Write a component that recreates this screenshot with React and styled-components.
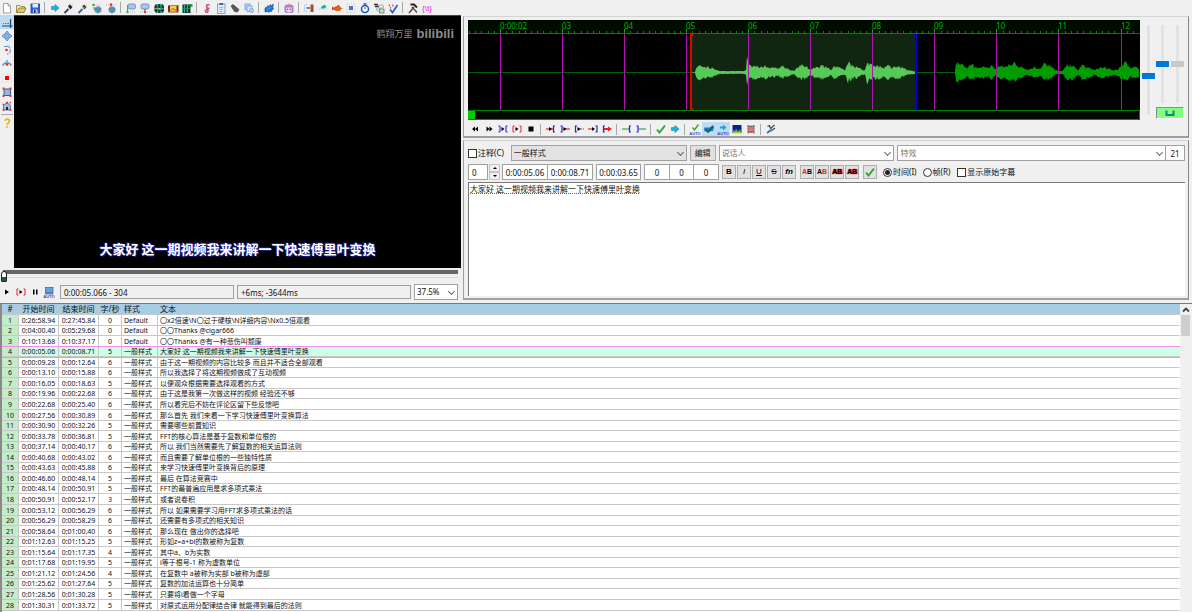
import React from "react";
import styled, { createGlobalStyle, css } from "styled-components";

const GlobalStyle = createGlobalStyle`
  * { box-sizing: border-box; }
  html, body, #root { height: 100%; margin: 0; }
  body {
    overflow: hidden;
    background: #f0f0f0;
    color: #111;
    font: 8px/12px "Noto Sans", "Noto Sans CJK SC", sans-serif;
  }
  button, input, select, textarea { font: inherit; color: inherit; margin: 0; }
`;

/* ---------- icons ---------- */

const play = <path d="M5 4.5 9 7 5 9.5z" fill="#000" />;
const auto = (
  <text x="7" y="13" fontSize="4" fontWeight="bold" textAnchor="middle" fill="#2b4fd0" fontFamily="Liberation Sans, sans-serif">
    AUTO
  </text>
);
const rightArrow = <path d="M3.5 5.5H7V3.5L11 7 7 10.500V8.500H3.500z" fill="#12b5e5" stroke="#0787b4" strokeWidth=".6" />;
const bracket = (x, dir, color) => (
  <path d={`M${x - dir} 4H${x}V10H${x - dir}`} fill="none" stroke={color} strokeWidth="1.2" />
);
const cube = (
  <>
    <path d="M5 7 8 5.500 11 7V10.500L8 12 5 10.500z" fill="#5b9fd6" stroke="#5a87a8" strokeWidth=".7" />
    <path d="M5 7 8 8.500 11 7M8 8.500V12" fill="none" stroke="#3d6e90" strokeWidth=".7" />
  </>
);

const icons = {
  new: <path d="M3.500 2.500H8L10.500 5V12H3.500zM8 2.500V5H10.500" fill="#fff" stroke="#8a8a8a" strokeWidth=".8" />,
  open: (
    <>
      <path d="M2.500 11V4.500H6L7 5.500H10.500V7" fill="#f7e9a8" stroke="#8b7a3c" strokeWidth=".8" />
      <path d="M2.500 11.500 5 7H12L10 11.500z" fill="#e3c766" stroke="#83702c" strokeWidth=".8" />
    </>
  ),
  save: (
    <>
      <rect x="3" y="3" width="8.500" height="9" fill="#2b66d9" stroke="#1c3f94" strokeWidth=".8" />
      <rect x="4.500" y="3" width="5.500" height="3.500" fill="#dfeafc" />
      <rect x="5" y="8.500" width="4.500" height="3.500" fill="#b9c6dd" />
      <rect x="6" y="9" width="1.500" height="3" fill="#12275c" />
    </>
  ),
  goto: rightArrow,
  find: (
    <>
      <path d="M2.500 12 6.500 8" stroke="#2f3f5c" strokeWidth="1.800" />
      <path d="M6 5.500 8 3.500 10.500 6 8.500 8.500z" fill="#1d2533" />
      <path d="M6.500 4.500 8 3.500" stroke="#3f6cb0" />
      <path d="M9.500 3.500h1.500v1.500z" fill="#f4b98a" />
    </>
  ),
  findNext: (
    <>
      <path d="M2.500 12 6.500 8" stroke="#41608f" strokeWidth="1.800" />
      <path d="M6 5.500 8 3.500 10.500 6 8.500 8.500z" fill="#333b4a" />
      <path d="M7 5.500 8.500 7" stroke="#8fb4e8" />
      <path d="M9.500 3.500h1.500v1.500z" fill="#f4b98a" />
    </>
  ),
  snapStart: (
    <>
      <circle cx="3.500" cy="4" r="1.300" fill="#21c043" />
      <path d="M5.500 4H11" stroke="#bbb" strokeDasharray="1 1" />
      <path d="M4 6V8.500H6" stroke="#5f87b0" fill="none" />
      {cube}
    </>
  ),
  snapEnd: (
    <>
      <circle cx="7" cy="3.500" r="1.300" fill="#e0303a" />
      <path d="M2 4H5.500M9 4H12" stroke="#bbb" strokeDasharray="1 1" />
      <path d="M7 4.500V6" stroke="#a33" />
      {cube}
    </>
  ),
  videoStart: (
    <>
      <rect x="4" y="3" width="7.500" height="5" rx="1.500" fill="#a9c6ea" stroke="#6285b3" strokeWidth=".8" />
      <path d="M3.500 4V10" stroke="#5f87b0" />
      <circle cx="3.500" cy="11" r="1.200" fill="#21c043" />
      <path d="M6 11H12" stroke="#bbb" strokeDasharray="1 1" />
    </>
  ),
  videoEnd: (
    <>
      <rect x="3" y="3" width="8" height="5" rx="1.500" fill="#a9c6ea" stroke="#6285b3" strokeWidth=".8" />
      <path d="M7 8V10" stroke="#a33" />
      <circle cx="7" cy="11" r="1.200" fill="#e0303a" />
      <path d="M2 11H5M9 11H12" stroke="#bbb" strokeDasharray="1 1" />
    </>
  ),
  filmGrid: (
    <>
      <rect x="2.500" y="3" width="9.500" height="9" rx="3" fill="#123c3e" />
      <path d="M5.500 3V12M9 3V12" stroke="#18c4cc" strokeWidth="1.400" />
      <path d="M2.500 6H12M2.500 9.500H12" stroke="#123c3e" strokeWidth=".9" />
      <path d="M3 7.700H5M9.500 7.700H11.500" stroke="#39b54a" strokeWidth="1.200" />
      <path d="M6.300 7.700H8.300" stroke="#e8c92c" strokeWidth="1.500" />
    </>
  ),
  film: (
    <>
      <rect x="2" y="4" width="10.500" height="7.500" fill="#6b3018" />
      <rect x="4" y="5" width="6.500" height="5.500" fill="#f7cf4a" />
      <path d="M4.500 9.500 7 7.500 10 9.500" stroke="#d8402d" fill="none" />
      <path d="M2.500 4.500H12M2.500 11H12" stroke="#f2d070" strokeDasharray="1 1" />
    </>
  ),
  filmKey: (
    <>
      <rect x="2.500" y="3.500" width="8" height="8.500" fill="#10292a" />
      <path d="M4.500 4V11.500M7.500 4V11.500" stroke="#17b8bd" strokeWidth="1.400" />
      <path d="M2.500 7.500H10" stroke="#24963b" />
      <rect x="9.500" y="3" width="3" height="3" fill="#1fa53c" />
    </>
  ),
  style: <path d="M9.500 4.500C8.500 2.500 5.500 4 7 6.500S8.500 11.500 6.500 11.300 5 8.500 9.500 7" fill="none" stroke="#cf4c78" strokeWidth="1.500" />,
  clipboard: (
    <>
      <rect x="3.500" y="3" width="7.500" height="9.500" fill="#dce8f8" stroke="#7892b8" strokeWidth=".8" />
      <rect x="5.500" y="2" width="3.500" height="2" fill="#4c6388" />
      <path d="M5.500 6.500H9M5.500 8.500H9M5.500 10.500H8" stroke="#6f93cc" strokeWidth=".9" strokeDasharray="1 .6" />
    </>
  ),
  attach: <path d="M3 5 5 3.500 11 8.500 9.500 11 6.500 10.500z" fill="#55575b" stroke="#3a3b3e" strokeWidth=".6" />,
  translate: (
    <>
      <rect x="3" y="3" width="5" height="5.500" fill="#bfd7f6" stroke="#6b9bd8" strokeWidth=".8" />
      <rect x="5" y="5" width="5" height="5.500" fill="#dbe8fa" stroke="#6b9bd8" strokeWidth=".8" />
      <circle cx="9.500" cy="9.500" r="2" fill="#bfd7f6" stroke="#6b9bd8" strokeWidth=".8" />
    </>
  ),
  automation: (
    <>
      <path d="M3 11 3 7.500 4 6 5 6.500 6 4.500 7 5.500 8.500 3.500 9 5 11.500 3 10.800 6 11.500 8 10 9 9.500 10.500 8 10.300 6.500 11.500 5.500 10.500z" fill="#1f74d6" stroke="#174b94" strokeWidth=".6" />
      <path d="M5 9 8.500 6.500" stroke="#5aa9f5" strokeWidth=".9" />
    </>
  ),
  assist: (
    <>
      <path d="M2.500 11V6C2.500 2 11.500 2 11.500 6V11L9.500 12H4.500z" fill="#a383cf" />
      <path d="M4.300 6.500H9.700V9.500C9 12 5 12 4.300 9.500z" fill="#fbd9d4" />
      <path d="M5 8.200H6.300M7.700 8.200H9" stroke="#5b3a88" strokeWidth="1.100" />
      <path d="M4.500 4 7 2.800 9.500 4" stroke="#f4c09c" fill="none" />
    </>
  ),
  shift: (
    <>
      <path d="M2.500 3.500V10.500M4 3.500H6M4 10.500H6" stroke="#aab8c8" strokeDasharray="1 1" />
      <path d="M4.500 7H8" stroke="#2485e0" strokeWidth="1.800" />
      <rect x="8.500" y="3.500" width="3" height="7.500" fill="#9f4f2a" />
    </>
  ),
  resample: (
    <>
      <path d="M2 8H12" stroke="#bfe6e6" strokeWidth="1.200" />
      <path d="M5 7.500C5 5.500 7 4 9 4L10.500 6 8 7.500z" fill="#14a6a9" />
    </>
  ),
  kanji: (
    <>
      <ellipse cx="7.500" cy="7.500" rx="3.800" ry="2.600" fill="#e0661a" />
      <path d="M5 7.500 2 5.500V9.500z" fill="#c2470f" />
      <path d="M7 5.500 9 4 9 5.500zM11 7.500h1.500" fill="#c2470f" stroke="#c2470f" strokeWidth=".6" />
    </>
  ),
  resolution: (
    <>
      <rect x="3" y="3" width="8" height="8.500" fill="none" stroke="#c9d3de" strokeDasharray="1 1" />
      <rect x="5" y="5" width="4" height="4" fill="#4a75b4" />
    </>
  ),
  clock: (
    <>
      <circle cx="7" cy="8" r="3.500" fill="#fff" stroke="#1458b4" strokeWidth="1.500" />
      <path d="M5.500 3H8.500" stroke="#1458b4" strokeWidth="1.400" />
      <path d="M7 8V6" stroke="#1458b4" />
    </>
  ),
  convert: (
    <>
      <path d="M2 3.500H6M3 5.500H7" stroke="#333" strokeWidth="1.300" />
      <path d="M7 4H10C12 4 12 7 10 7H6C4 7 4 10 6 10H8" fill="none" stroke="#8ac09f" strokeWidth="1.100" />
      <rect x="7.500" y="8" width="4.500" height="4" fill="#c9ddc4" stroke="#3a7f55" strokeWidth=".7" />
    </>
  ),
  spell: (
    <>
      <path d="M3 3.500 5 7.500M7 3.500V6.500" stroke="#cf4655" strokeWidth="1.300" strokeDasharray="2 1" />
      <path d="M4 8.500 6.500 11.500 11.500 4" fill="none" stroke="#285fc4" strokeWidth="1.700" />
    </>
  ),
  tools: (
    <>
      <path d="M3 12 8 6" stroke="#7a3d1a" strokeWidth="1.500" />
      <path d="M4.500 3.500H8L11 6.500" fill="none" stroke="#222" strokeWidth="1.800" />
      <path d="M6 6 11 11.500" stroke="#444" strokeWidth="1.200" />
    </>
  ),
  tag: (
    <text x="7" y="10" fontSize="8" textAnchor="middle" fill="#f019e8" fontFamily="Liberation Sans, sans-serif">
      {"{\\t}"}
    </text>
  ),
  /* visual typesetting */
  crosshair: (
    <>
      <path d="M2 11H12.500M10.500 4V13" stroke="#1c3f74" strokeWidth="1.200" />
      <path d="M3 8.500H4M5 8.500H6.500M7.500 8.500H9" stroke="#3c78c8" strokeWidth="1.200" />
    </>
  ),
  move: <path d="M7 2 9 4.500H8V6H9.500V5L12 7 9.500 9V8H8V9.500H9L7 12 5 9.500H6V8H4.500V9L2 7 4.500 5V6H6V4.500H5z" fill="#8fb8ee" stroke="#4f80c8" strokeWidth=".7" />,
  rotateZ: (
    <>
      <path d="M7 3C11.500 3 11.500 11 7 11" fill="none" stroke="#7aa7e0" strokeWidth="1.300" strokeDasharray="4 1" />
      <circle cx="6.500" cy="7" r="1.300" fill="#e21" />
      <path d="M4 3.500H7" stroke="#5c8fd4" />
    </>
  ),
  rotateXY: (
    <>
      <path d="M3 9C3 5 11 5 11 9M7 3V5" fill="none" stroke="#5c8fd4" strokeWidth="1.300" />
      <circle cx="7" cy="7.500" r="1.300" fill="#e21" />
    </>
  ),
  scale: (
    <>
      <rect x="3" y="3" width="8" height="8" fill="#f8f8f8" stroke="#ddd" strokeWidth=".8" />
      <rect x="5" y="5" width="4" height="4" fill="#f00" />
    </>
  ),
  clip: (
    <>
      <rect x="4" y="4" width="6.500" height="6.500" fill="#8fb6e4" stroke="#4a5c78" strokeWidth="1" />
      <path d="M2.500 3.500H4.500M9.500 3.500H11.500M2.500 11H4.500M9.500 11H11.500" stroke="#e33" strokeWidth="2" />
    </>
  ),
  vectorClip: (
    <>
      <path d="M3.500 11V7.500C3.500 3.500 10.500 3.500 10.500 7.500V11z" fill="#9cc2ee" stroke="#4a5c78" strokeWidth=".8" />
      <path d="M2.500 11H4.500M9.500 11H11.500M2.500 5.500H4M6 3.500H8M9.500 3.500H11" stroke="#e33" strokeWidth="1.600" />
      <rect x="6" y="8" width="2" height="3" fill="#223" />
    </>
  ),
  help: (
    <>
      <path d="M5 5C5 2.500 9.500 2.500 9.500 5S7 6.500 7 9" fill="none" stroke="#e8b41c" strokeWidth="1.700" />
      <circle cx="7" cy="11" r="1" fill="#e8b41c" />
    </>
  ),
  /* playback */
  prev: <path d="M7 4.500V9.500L4 7zM10 4.500V9.500L7 7z" fill="#000" />,
  next: <path d="M4.500 4.500V9.500L7.500 7zM7.500 4.500V9.500L10.500 7z" fill="#000" />,
  playSel: (
    <>
      <path d="M2.500 4H4V10H2.500M11.500 4H10V10H11.500" fill="none" stroke="#2222e8" />
      <path d="M5.500 5 8.500 7 5.500 9z" fill="#000" />
    </>
  ),
  playLine: (
    <>
      <path d="M4.500 4H3V10H4.500M9.500 4H11V10H9.500" fill="none" stroke="#f02020" />
      <path d="M5.500 5 8.500 7 5.500 9z" fill="#000" />
    </>
  ),
  stop: <rect x="4.500" y="4.500" width="5" height="5" fill="#000" />,
  play,
  pause: <path d="M5 4.500H6.500V9.500H5zM8 4.500H9.500V9.500H8z" fill="#000" />,
  before: (
    <>
      <path d="M2 7H9" stroke="#f02020" strokeWidth="1.200" />
      <path d="M5 5 8 7 5 9z" fill="#000" />
      {bracket(9.5, -1.5, "#2222e8")}
    </>
  ),
  after: (
    <>
      {bracket(4, 1.5, "#2222e8")}
      <path d="M5 7H12" stroke="#f02020" strokeWidth="1.200" />
      <path d="M5.500 5 8.500 7 5.500 9z" fill="#000" />
    </>
  ),
  first: (
    <>
      {bracket(3.5, -1.5, "#2222e8")}
      <path d="M7 7H12" stroke="#f02020" strokeWidth="1.200" strokeDasharray="3 1" />
      <path d="M5.500 5 8.500 7 5.500 9z" fill="#000" />
    </>
  ),
  last: (
    <>
      {bracket(11, 1.5, "#2222e8")}
      <path d="M2 7H8" stroke="#f02020" strokeWidth="1.200" />
      <path d="M6 5 9 7 6 9z" fill="#000" />
    </>
  ),
  toEnd: (
    <>
      {bracket(3.5, -1.5, "#2222e8")}
      <path d="M4 7H9" stroke="#f02020" strokeWidth="2" />
      <path d="M8 4.500 12 7 8 9.500z" fill="#f02020" />
    </>
  ),
  leadIn: (
    <>
      <path d="M2 7H9" stroke="#3aa04a" strokeWidth="1.200" />
      {bracket(9.5, -1.5, "#2222e8")}
    </>
  ),
  leadOut: (
    <>
      <path d="M4.500 7H12" stroke="#3aa04a" strokeWidth="1.200" />
      {bracket(4, 1.5, "#2222e8")}
    </>
  ),
  commit: <path d="M3 7.500 5.500 10.500 11 3.500" fill="none" stroke="#25a52b" strokeWidth="1.800" />,
  autoCommit: (
    <>
      <path d="M4.500 5.500 6.500 8 10.500 2.500" fill="none" stroke="#25a52b" strokeWidth="1.300" />
      {auto}
    </>
  ),
  autoNext: (
    <>
      <path d="M4 4.500H7V2.500L10.500 5.500 7 8.500V6.500H4z" fill="#12a5e0" />
      {auto}
    </>
  ),
  medusa: (
    <>
      <path d="M2 5.500H7.500L11 3 12 5.500 11 9 7 9.500H2.500z" fill="#1f7fd0" />
      <path d="M3.500 7 6 10 11 4.500" fill="none" stroke="#175d3c" strokeWidth="1.500" />
    </>
  ),
  spectrum: (
    <>
      <rect x="2.500" y="3" width="9" height="8" fill="#0c1c9c" />
      <path d="M3 11V8L5 9 6 6.500 8 9.500 10 7 11 11z" fill="#48c028" />
      <path d="M3 11H11.500" stroke="#e7d420" strokeWidth="1.300" />
    </>
  ),
  karaoke: (
    <>
      <rect x="4" y="3.500" width="6" height="7.500" fill="#d9797c" />
      <path d="M4 3V11.500M10 3V11.500M3.500 4.500H10.500M3.500 10H10.500" stroke="#666" strokeWidth="1.100" strokeDasharray="2 .6" />
    </>
  ),
  wrench: (
    <>
      <path d="M3 11 7 8" stroke="#3a67a8" strokeWidth="1.600" />
      <path d="M3.500 4.500 5.500 3.500 6.500 6.500 10.500 3M7 9 11 6" fill="none" stroke="#444" strokeWidth="1.200" />
      <circle cx="7.500" cy="7.500" r="1.300" fill="#5f8fd0" />
    </>
  ),
  autoScroll: (
    <>
      <rect x="3.500" y="2.500" width="7.500" height="5" fill="#5aa6e6" stroke="#2c5f9c" strokeWidth=".7" />
      <path d="M3 8.800H11.500" stroke="#445" />
      {auto}
    </>
  ),
  link: <path d="M3.500 4.500V9H10.500V4.500" fill="none" stroke="#168585" strokeWidth="2" />,
  chevronUp: <path d="M4 8.500 7 5.500 10 8.500" fill="none" stroke="#444" strokeWidth="1.800" />,
};

const Svg = styled.svg`
  display: block;
  width: 14px;
  height: 14px;
  flex: none;
`;
const Icon = ({ name }) => (
  <Svg viewBox="0 0 14 14" aria-hidden="true">
    {icons[name]}
  </Svg>
);

/* ---------- shared controls ---------- */

const ToolButton = styled.button`
  display: flex;
  align-items: center;
  justify-content: center;
  width: 14px;
  height: 14px;
  padding: 0;
  border: 0;
  background: ${(p) => (p.$active ? "#bcdcf4" : "transparent")};
`;
const Separator = styled.span`
  flex: none;
  align-self: center;
  background: #a8a8a8;
  ${(p) =>
    p.$horizontal
      ? css`width: 12px; height: 1px; margin: 1px 0;`
      : css`width: 1px; height: 11px; margin: 0 3px 0 2px;`}
`;
const Tools = ({ items, active = [], horizontal }) =>
  items.map((name, i) =>
    name === "|" ? (
      <Separator key={i} $horizontal={horizontal} />
    ) : (
      <ToolButton key={i} type="button" aria-label={name} $active={active.includes(name)}>
        <Icon name={name} />
      </ToolButton>
    )
  );

const field = css`
  height: 16px;
  border: 1px solid #a0a0a0;
  border-radius: 0;
  background: #fff;
  padding: 0 4px;
  outline: 0;
  min-width: 0;
`;
const TextField = styled.input`
  ${field}
  width: ${(p) => (p.$w ? `${p.$w}px` : "auto")};
  text-align: ${(p) => (p.$center ? "center" : "left")};
  padding: 0 ${(p) => (p.$center ? 0 : 3)}px;
`;
const SelectBox = styled.span`
  position: relative;
  display: flex;
  min-width: 0;
  flex: ${(p) => p.$flex || "none"};
  &::after {
    content: "";
    position: absolute;
    right: 4px;
    top: 5px;
    width: 4px;
    height: 4px;
    border: solid #666;
    border-width: 0 1px 1px 0;
    transform: rotate(45deg);
    pointer-events: none;
  }
`;
const SelectField = styled.select`
  ${field}
  width: 100%;
  padding: 0 2px;
  appearance: none;
  background: ${(p) => (p.$grey ? "#e3e3e3" : "#fff")};
  color: ${(p) => (p.$hint ? "#777" : "#111")};
`;
const PushButton = styled.button`
  flex: none;
  width: ${(p) => p.$w}px;
  height: ${(p) => p.$h}px;
  padding: 0;
  display: flex;
  align-items: center;
  justify-content: center;
  border: 1px solid #adadad;
  background: #e1e1e1;
`;
const Check = styled.input`
  appearance: none;
  width: 9px;
  height: 9px;
  flex: none;
  border: 1px solid #333;
  background: #fff;
  border-radius: ${(p) => (p.type === "radio" ? "50%" : "0")};
  &:checked { background: radial-gradient(circle, #222 0 2px, #fff 3px); }
`;
const Label = styled.label`
  display: flex;
  align-items: center;
  gap: 1px;
  white-space: nowrap;
  margin-right: ${(p) => p.$gap}px;
`;

/* ---------- layout ---------- */

const Page = styled.div`
  display: flex;
  flex-direction: column;
  height: 100vh;
`;
const TopBar = styled.header`
  display: flex;
  align-items: center;
  height: 15px;
  flex: none;
`;
const Main = styled.main`
  display: flex;
  flex: none;
  height: 288px;
`;
const VideoPanel = styled.section`
  width: 461px;
  flex: none;
  display: flex;
  flex-direction: column;
`;
const VideoRow = styled.div`
  display: flex;
  height: 253px;
`;
const SideBar = styled.nav`
  width: 14px;
  display: flex;
  flex-direction: column;
`;
const Screen = styled.div`
  flex: 1;
  display: flex;
  flex-direction: column;
  justify-content: space-between;
  background: #000;
  border-top: 1px solid #444;
  padding: 8px 7px 10px;
`;
const Watermark = styled.div`
  display: flex;
  align-items: center;
  justify-content: flex-end;
  gap: 4px;
  height: 20px;
  color: #8b8b8b;
  font-size: 9px;
`;
const Logo = styled.span`
  font: bold 13px/18px "Liberation Sans Narrow", "Liberation Sans", sans-serif;
`;
const Subtitle = styled.div`
  text-align: center;
  color: #fff;
  font: bold 13px/18px "Noto Sans CJK SC", sans-serif;
  text-shadow: 0 0 1px #2a2ab0, 1px 1px 1px #20208c, -1px -1px 1px #20208c;
`;
const Seek = styled.input`
  appearance: none;
  display: block;
  width: 457px;
  height: 16px;
  margin: 0 0 0 1px;
  background: linear-gradient(#666, #666) 2px 2px / 100% 4px no-repeat, linear-gradient(#d8d8d8, #d8d8d8) 2px 9px / 100% 1px no-repeat;
  &::-webkit-slider-thumb {
    appearance: none;
    width: 6px;
    height: 11px;
    border: 1px solid #222;
    border-radius: 3px 3px 1px 1px;
    background: linear-gradient(#fff 60%, #1e5a50 60%);
  }
`;
const VideoControls = styled.div`
  display: flex;
  align-items: center;
  gap: 3px;
  height: 16px;
  padding-right: 3px;
  & > div { display: flex; width: 57px; }
  & > input { height: 14px; background: #f0f0f0; flex: 1; }
`;

const RightPanel = styled.section`
  flex: 1;
  min-width: 0;
  display: flex;
  flex-direction: column;
  gap: 2px;
  margin: 1px 3px 3px 2px;
`;
const Frame = styled.div`
  display: flex;
  flex-direction: column;
  border: solid #a0a0a0;
  border-width: 1px 1px 2px 1px;
  border-top-color: #d4d4d4;
  border-right-color: #858585;
  padding: 3px 3px 0 4px;
  flex: ${(p) => (p.$grow ? 1 : "none")};
`;
const AudioRow = styled.div`
  display: flex;
  gap: 1px;
`;
const Wave = styled.svg`
  flex: 1;
  min-width: 0;
  height: 100px;
  display: block;
  background: #000;
`;
const Sliders = styled.div`
  display: grid;
  grid-template-columns: 14px 15px 15px;
  grid-template-rows: 87px 13px;
  justify-items: center;
`;
const VSlider = styled.input`
  appearance: none;
  writing-mode: vertical-lr;
  direction: rtl;
  width: 13px;
  height: ${(p) => (p.$tall ? 90 : 78)}px;
  margin-top: 5px;
  grid-row: ${(p) => (p.$tall ? "1 / 3" : "1")};
  background: linear-gradient(#dfe3e3, #dfe3e3) center / 3px 100% no-repeat;
  &::-webkit-slider-thumb {
    appearance: none;
    width: 13px;
    height: 6px;
    background: ${(p) => (p.disabled ? "#c8c8c8" : "#0078d7")};
  }
`;
const LinkButton = styled.button`
  grid-column: 2 / 4;
  width: 28px;
  height: 12px;
  padding: 0;
  display: flex;
  align-items: center;
  justify-content: center;
  border: 1px solid #8a8a8a;
  border-right-color: #fff;
  border-bottom-color: #fff;
  background: #80ff80;
`;
const AudioTools = styled.div`
  display: flex;
  align-items: center;
  height: 16px;
  padding-top: 2px;
`;
const EditRow = styled.div`
  display: flex;
  align-items: center;
  height: ${(p) => p.$h}px;
  gap: ${(p) => p.$gap || 0}px;
`;
const Group = styled.div`
  display: flex;
  margin-right: ${(p) => (p.$m ?? 3)}px;
  gap: ${(p) => p.$gap || 0}px;
  & > input + input { border-left-width: ${(p) => (p.$gap ? 1 : 0)}px; }
`;
const EffectGroup = styled.div`
  display: flex;
  flex: 288;
  min-width: 0;
  & > input { border-left-width: 0; flex: none; }
`;
const Stepper = styled.div`
  display: flex;
  flex-direction: column;
  width: 11px;
  margin-right: 2px;
`;
const StepButton = styled.button`
  height: 8px;
  padding: 0;
  border: 1px solid #c4c4c4;
  background: #f0f0f0;
  display: flex;
  align-items: center;
  justify-content: center;
  &::after {
    content: "";
    border: 2px solid transparent;
    border-top-width: ${(p) => (p.$up ? 0 : 2)}px;
    border-bottom-width: ${(p) => (p.$up ? 2 : 0)}px;
    border-${(p) => (p.$up ? "bottom" : "top")}-color: #000;
  }
`;
const Fmt = styled.span`
  font: ${(p) => p.$font || "bold 8px/10px Liberation Sans, sans-serif"};
  text-decoration: ${(p) => p.$deco || "none"};
  color: ${(p) => p.$color || "#000"};
  text-shadow: ${(p) => (p.$shadow ? "0 0 1px #d00, 1px 0 1px #d00" : "none")};
  & > b { color: ${(p) => p.$second || "inherit"}; }
`;
const Editor = styled.textarea`
  flex: 1;
  resize: none;
  border: 0;
  border-top: 1px solid #7a7a7a;
  border-left: 1px solid #7a7a7a;
  outline: 0;
  padding: 0 1px;
  margin: 0 0 2px;
  background: #fff;
  text-decoration: underline dotted #f02020 1px;
  text-underline-offset: 1px;
`;

const GridArea = styled.section`
  display: flex;
  flex: 1;
  min-height: 0;
  overflow: hidden;
  border-top: 1px solid #7a7a7a;
  border-left: 2px solid #8a8a8a;
  background: #fff;
`;
const Table = styled.table`
  flex: 1;
  width: 100%;
  align-self: flex-start;
  table-layout: fixed;
  border-collapse: separate;
  border-spacing: 0;
  font-size: 7px;
  line-height: 9px;
`;
const Col = styled.col`
  width: ${(p) => p.$w}px;
`;
const Th = styled.th`
  height: 11px;
  padding: 0 0 0 ${(p) => (p.$left ? 2 : 0)}px;
  font-weight: normal;
  font-size: 8px;
  line-height: 10px;
  white-space: nowrap;
  text-align: ${(p) => (p.$left ? "left" : "center")};
  background: #a5cde6;
  border-right: 1px solid ${(p) => (p.$end ? "transparent" : "#bcc8cf")};
  border-bottom: 1px solid #c8c8c8;
`;
const Td = styled.td`
  padding: 0 0 0 ${(p) => (p.$left ? 2 : 0)}px;
  white-space: nowrap;
  text-align: ${(p) => (p.$left ? "left" : "center")};
  border-right: 1px solid ${(p) => (p.$end ? "transparent" : "#c8c8c8")};
  border-bottom: 1px solid #c8c8c8;
  background: ${(p) => (p.$num ? "#c4ecc9" : "transparent")};
`;
const Tr = styled.tr`
  height: 11px;
  &:nth-child(9n + 2), &:nth-child(9n + 4), &:nth-child(9n + 6), &:nth-child(9n + 8) { height: 10px; }
  ${(p) =>
    p.$selected &&
    css`
      background: #ccffe6;
      outline: 1px solid #f78cf0;
    `}
`;
const ScrollBar = styled.div`
  width: 12px;
  flex: none;
  background: #f0f0f0;
  padding: 0 2px 0 1px;
`;
const ScrollThumb = styled.div`
  height: 21px;
  background: #cdcdcd;
`;
const ScrollUp = styled.button`
  display: flex;
  align-items: center;
  justify-content: center;
  width: 9px;
  height: 11px;
  padding: 0;
  border: 0;
  background: transparent;
  overflow: hidden;
`;

/* ---------- data ---------- */

const G = "一般样式";
const lines = [
  ["0:26:58.94", "0:27:45.84", 0, "Default", "〇x2倍速\\N〇过于硬核\\N详细内容\\Nx0.5倍观看"],
  ["0:04:00.40", "0:05:29.68", 0, "Default", "〇〇Thanks @cigar666"],
  ["0:10:13.68", "0:10:37.17", 0, "Default", "〇〇Thanks @有一种悲伤叫颓废"],
  ["0:00:05.06", "0:00:08.71", 5, G, "大家好 这一期视频我来讲解一下快速傅里叶变换"],
  ["0:00:09.28", "0:00:12.64", 6, G, "由于这一期视频的内容比较多 而且并不适合全部观看"],
  ["0:00:13.10", "0:00:15.88", 6, G, "所以我选择了将这期视频做成了互动视频"],
  ["0:00:16.05", "0:00:18.63", 5, G, "以便观众根据需要选择观看的方式"],
  ["0:00:19.96", "0:00:22.68", 6, G, "由于这是我第一次做这样的视频 经验还不够"],
  ["0:00:22.68", "0:00:25.40", 6, G, "所以看完后不妨在评论区留下些反馈吧"],
  ["0:00:27.56", "0:00:30.89", 6, G, "那么首先 我们来看一下学习快速傅里叶变换算法"],
  ["0:00:30.90", "0:00:32.26", 5, G, "需要哪些前置知识"],
  ["0:00:33.78", "0:00:36.81", 5, G, "FFT的核心算法是基于复数和单位根的"],
  ["0:00:37.14", "0:00:40.17", 6, G, "所以 我们当然需要先了解复数的相关运算法则"],
  ["0:00:40.68", "0:00:43.02", 6, G, "而且需要了解单位根的一些独特性质"],
  ["0:00:43.63", "0:00:45.88", 6, G, "来学习快速傅里叶变换背后的原理"],
  ["0:00:46.60", "0:00:48.14", 5, G, "最后 在算法竞赛中"],
  ["0:00:48.14", "0:00:50.91", 5, G, "FFT的最普遍应用是求多项式乘法"],
  ["0:00:50.91", "0:00:52.17", 3, G, "或者说卷积"],
  ["0:00:53.12", "0:00:56.29", 6, G, "所以 如果需要学习用FFT求多项式乘法的话"],
  ["0:00:56.29", "0:00:58.29", 6, G, "还需要有多项式的相关知识"],
  ["0:00:58.64", "0:01:00.40", 6, G, "那么现在 做出你的选择吧"],
  ["0:01:12.63", "0:01:15.25", 5, G, "形如z=a+bi的数被称为复数"],
  ["0:01:15.64", "0:01:17.35", 4, G, "其中a、b为实数"],
  ["0:01:17.68", "0:01:19.95", 5, G, "i等于根号-1 称为虚数单位"],
  ["0:01:21.12", "0:01:24.56", 4, G, "在复数中 a被称为实部 b被称为虚部"],
  ["0:01:25.62", "0:01:27.64", 5, G, "复数的加法运算也十分简单"],
  ["0:01:28.56", "0:01:30.28", 5, G, "只要将i看做一个字母"],
  ["0:01:30.31", "0:01:33.72", 5, G, "对原式运用分配律结合律 就能得到最后的法则"],
];

const selectedEnvelope = [
  [227, 0], [228, 5], [231, 7], [236, 7], [239, 5], [243, 5], [248, 3], [252, 1], [258, 1], [276, 1], [278, 2], [279, 14], [281, 7],
  [298, 6], [306, 5], [310, 3], [314, 7], [320, 4], [326, 1], [329, 5], [334, 7], [339, 6], [342, 2], [346, 6], [350, 5], [354, 8], [359, 5],
  [363, 3], [367, 7], [372, 4], [377, 2], [380, 10], [385, 6], [390, 6], [394, 2], [397, 2], [399, 10], [404, 7], [412, 7], [416, 4],
  [420, 9], [424, 4], [430, 8], [434, 5], [439, 2], [446, 1], [449, 0],
];
const restEnvelope = [
  [487, 0], [488, 10], [494, 8], [499, 4], [504, 8], [509, 5], [515, 6], [520, 4], [524, 7], [528, 3], [531, 8], [536, 6], [540, 7],
  [546, 9], [552, 6], [559, 2], [567, 6], [572, 3], [576, 8], [582, 7], [588, 2], [594, 1], [599, 7], [605, 8], [610, 2], [614, 8], [619, 6],
  [627, 2], [632, 6], [639, 5], [645, 2], [650, 3], [657, 10], [662, 5], [667, 6], [672, 4],
];
const noise = (x) => Math.abs((Math.sin(x * 127.1) * 43758.5453) % 1);
const wavePath = (env) => {
  const up = [];
  const down = [];
  for (let i = 0; i < env.length - 1; i++) {
    const [x0, a0] = env[i];
    const [x1, a1] = env[i + 1];
    for (let x = x0; x < x1; x++) {
      const a = a0 + ((a1 - a0) * (x - x0)) / (x1 - x0);
      up.push(`${x} ${(52 - a * (0.6 + 0.55 * noise(x))).toFixed(1)}`);
      down.unshift(`${x} ${(53 + a * (0.55 + 0.55 * noise(x + 900))).toFixed(1)}`);
    }
  }
  return `M${up.join("L")}L${down.join("L")}z`;
};
const second = (i) => 32 + Math.round(i * 62.05);
const labels = ["0:00:02", "03", "04", "05", "06", "07", "08", "09", "10", "11", "12"];

const Waveform = () => (
  <Wave viewBox="0 0 672 100" preserveAspectRatio="xMinYMin slice" role="img" aria-label="waveform">
    <rect width="672" height="13" fill="#000c00" />
    <rect x="223" y="14" width="225" height="76" fill="#112611" />
    {Array.from({ length: 108 }, (_, i) => (
      <rect key={i} x={Math.round(1 + i * 6.205)} y="11" width="1" height="2" fill="#008c00" />
    ))}
    {labels.map((t, i) => (
      <g key={t}>
        <rect x={second(i)} y="9" width="1" height="4" fill="#00b400" />
        <text x={second(i)} y="9" fontSize="8" fill="#00b800">{t}</text>
      </g>
    ))}
    <rect y="13" width="672" height="1" fill="#008000" />
    <rect y="52" width="672" height="1" fill="#006000" />
    <rect x="223" y="52" width="225" height="1" fill="#3a8f3a" />
    <path d={wavePath(selectedEnvelope)} fill="#56c956" />
    <path d={wavePath(restEnvelope)} fill="#009c00" />
    {labels.map((t, i) => (
      <rect key={t} x={second(i)} y="14" width="1" height="76" fill="#b012b0" />
    ))}
    <path d="M222 14H226L224 17V87L226 90H222z" fill="#e80000" />
    <path d="M449 14H445L447 17V87L445 90H449z" fill="#0000e0" />
    <rect y="90" width="672" height="1" fill="#008000" />
    <rect x="0" y="91" width="672" height="9" fill="#000a00" />
    <rect y="91" width="7" height="8" fill="#00cc00" />
    <path d="M0 99.500H671.500V90" fill="none" stroke="#008c00" />
  </Wave>
);

const topTools = [
  "new", "open", "save", "|", "goto", "find", "findNext", "snapStart", "snapEnd", "|", "videoStart", "videoEnd", "filmGrid", "film",
  "filmKey", "|", "style", "clipboard", "attach", "translate", "|", "automation", "|", "assist", "|", "shift", "resample", "kanji",
  "resolution", "clock", "convert", "spell", "|", "tools", "tag",
];
const audioTools = [
  "prev", "next", "playSel", "playLine", "stop", "|", "before", "after", "first", "last", "toEnd", "|", "leadIn", "leadOut", "|",
  "commit", "goto", "|", "autoCommit", "medusa", "autoNext", "spectrum", "karaoke", "|", "wrench",
];
const sideTools = ["crosshair", "move", "rotateZ", "rotateXY", "scale", "clip", "vectorClip", "|", "help"];

const slanted = "italic 8px/10px Liberation Sans, sans-serif";
const small = "bold 7px/10px Liberation Sans, sans-serif";

export default function App() {
  return (
    <Page>
      <GlobalStyle />
      <TopBar>
        <Tools items={topTools} />
      </TopBar>
      <Main>
        <VideoPanel>
          <VideoRow>
            <SideBar>
              <Tools items={sideTools} active={["crosshair"]} horizontal />
            </SideBar>
            <Screen>
              <Watermark>
                鹤翔万里<Logo>bilibili</Logo>
              </Watermark>
              <Subtitle>大家好 这一期视频我来讲解一下快速傅里叶变换</Subtitle>
            </Screen>
          </VideoRow>
          <Seek type="range" min="0" max="1000" defaultValue="0" aria-label="seek" />
          <VideoControls>
            <div>
              <Tools items={["play", "playLine", "pause", "autoScroll"]} />
            </div>
            <TextField readOnly value="0:00:05.066 - 304" aria-label="position" />
            <TextField readOnly value="+6ms; -3644ms" aria-label="offset" />
            <SelectBox $flex="0 0 44px">
              <SelectField aria-label="zoom" defaultValue="37.5%">
                <option>37.5%</option>
              </SelectField>
            </SelectBox>
          </VideoControls>
        </VideoPanel>
        <RightPanel>
          <Frame>
            <AudioRow>
              <Waveform />
              <Sliders>
                <VSlider $tall type="range" defaultValue="43" aria-label="horizontal zoom" />
                <VSlider type="range" defaultValue="50" aria-label="vertical zoom" />
                <VSlider type="range" defaultValue="50" disabled aria-label="volume" />
                <LinkButton type="button" aria-label="link">
                  <Icon name="link" />
                </LinkButton>
              </Sliders>
            </AudioRow>
            <AudioTools>
              <Tools items={audioTools} active={["medusa", "autoNext"]} />
            </AudioTools>
          </Frame>
          <Frame $grow>
            <EditRow $h={18} $gap={3}>
              <Label $gap={4}>
                <Check type="checkbox" />
                注释(C)
              </Label>
              <SelectBox $flex="176">
                <SelectField $grey aria-label="style" defaultValue={G}>
                  <option>{G}</option>
                </SelectField>
              </SelectBox>
              <PushButton type="button" $w={26} $h={16}>编辑</PushButton>
              <SelectBox $flex="176">
                <SelectField $hint aria-label="actor">
                  <option>说话人</option>
                </SelectField>
              </SelectBox>
              <EffectGroup>
                <SelectBox $flex="1">
                  <SelectField $hint aria-label="effect">
                    <option>特效</option>
                  </SelectField>
                </SelectBox>
                <TextField $w={19} $center readOnly value="21" aria-label="characters" />
              </EffectGroup>
            </EditRow>
            <EditRow $h={20}>
              <Group $m={1}>
                <TextField $w={20} defaultValue="0" aria-label="layer" />
              </Group>
              <Stepper>
                <StepButton $up type="button" aria-label="up" />
                <StepButton type="button" aria-label="down" />
              </Stepper>
              <Group>
                <TextField $w={46} $center defaultValue="0:00:05.06" aria-label="start" />
                <TextField $w={45} $center defaultValue="0:00:08.71" aria-label="end" />
              </Group>
              <Group>
                <TextField $w={45} $center defaultValue="0:00:03.65" aria-label="duration" />
              </Group>
              <Group>
                <TextField $w={26} $center defaultValue="0" aria-label="left margin" />
                <TextField $w={24} $center defaultValue="0" aria-label="right margin" />
                <TextField $w={25} $center defaultValue="0" aria-label="vertical margin" />
              </Group>
              <Group $gap={1} $m={4}>
                <PushButton type="button" $w={14} $h={14}><Fmt>B</Fmt></PushButton>
                <PushButton type="button" $w={14} $h={14}><Fmt $font={slanted}>I</Fmt></PushButton>
                <PushButton type="button" $w={14} $h={14}><Fmt $font="8px/10px Liberation Sans, sans-serif" $deco="underline">U</Fmt></PushButton>
                <PushButton type="button" $w={14} $h={14}><Fmt $font="8px/10px Liberation Sans, sans-serif" $deco="line-through">S</Fmt></PushButton>
                <PushButton type="button" $w={14} $h={14}><Fmt $font={`bold ${slanted}`}>fn</Fmt></PushButton>
              </Group>
              <Group $gap={1} $m={4}>
                <PushButton type="button" $w={14} $h={14}><Fmt $color="#f02020" $second="#000" $font={small}>A<b>B</b></Fmt></PushButton>
                <PushButton type="button" $w={14} $h={14}><Fmt $second="#f02020" $font={small}>A<b>B</b></Fmt></PushButton>
                <PushButton type="button" $w={14} $h={14}><Fmt $shadow $font={small}>AB</Fmt></PushButton>
                <PushButton type="button" $w={14} $h={14}><Fmt $shadow $font={small}>AB</Fmt></PushButton>
              </Group>
              <Group $m={6}>
                <PushButton type="button" $w={14} $h={14} aria-label="commit"><Icon name="commit" /></PushButton>
              </Group>
              <Label $gap={6}>
                <Check type="radio" name="unit" defaultChecked />
                时间(I)
              </Label>
              <Label $gap={7}>
                <Check type="radio" name="unit" />
                帧(R)
              </Label>
              <Label>
                <Check type="checkbox" />
                显示原始字幕
              </Label>
            </EditRow>
            <Editor spellCheck={false} aria-label="text" defaultValue="大家好 这一期视频我来讲解一下快速傅里叶变换" />
          </Frame>
        </RightPanel>
      </Main>
      <GridArea>
        <Table>
          <colgroup>
            <Col $w={17} />
            <Col $w={40} />
            <Col $w={40} />
            <Col $w={23} />
            <Col $w={36} />
            <col />
          </colgroup>
          <thead>
            <tr>
              <Th>#</Th>
              <Th>开始时间</Th>
              <Th>结束时间</Th>
              <Th>字/秒</Th>
              <Th $left>样式</Th>
              <Th $left $end>文本</Th>
            </tr>
          </thead>
          <tbody>
            {lines.map(([start, end, cps, style, text], i) => (
              <Tr key={i} $selected={i === 3}>
                <Td $num>{i + 1}</Td>
                <Td>{start}</Td>
                <Td>{end}</Td>
                <Td>{cps}</Td>
                <Td $left>{style}</Td>
                <Td $left $end>{text}</Td>
              </Tr>
            ))}
          </tbody>
        </Table>
        <ScrollBar>
          <ScrollUp type="button" aria-label="scroll up">
            <Icon name="chevronUp" />
          </ScrollUp>
          <ScrollThumb />
        </ScrollBar>
      </GridArea>
    </Page>
  );
}
